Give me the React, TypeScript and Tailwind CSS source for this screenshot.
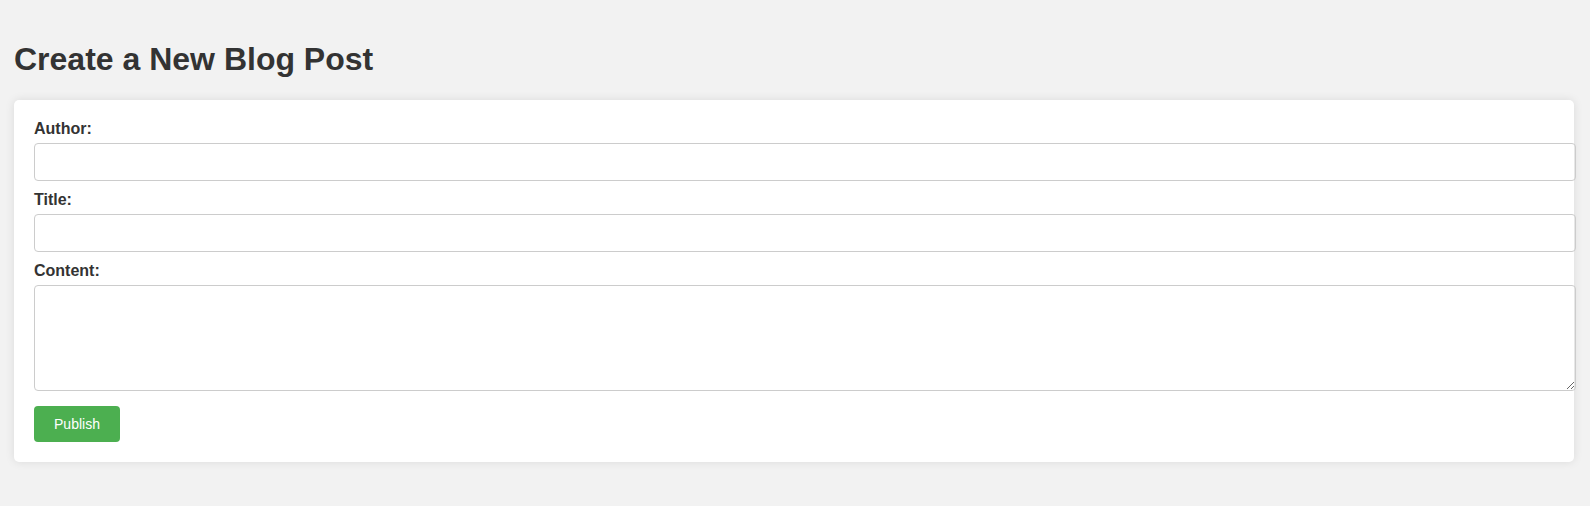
import { useState } from 'react';

const fields = [
  { id: 'author', label: 'Author:' },
  { id: 'title', label: 'Title:' },
];

export default function App() {
  const [form, setForm] = useState({ author: '', title: '', content: '' });

  const update = (key: string, value: string) => setForm({ ...form, [key]: value });

  return (
    <div className="min-h-[506px] bg-[#f2f2f2] pl-[14px] pr-[16px] pt-[20px] pb-[44px] font-['Liberation_Sans',Arial,sans-serif] text-[#333]">
      <h1 className="mt-[21px] mb-[22px] text-[32px] font-bold leading-[37px]">Create a New Blog Post</h1>

      <form
        className="rounded-[5px] bg-white p-5 shadow-[0_0_10px_rgba(0,0,0,0.1)]"
        onSubmit={(e) => e.preventDefault()}
      >
        {fields.map((f) => (
          <div key={f.id}>
            <label htmlFor={f.id} className="mb-[5px] block text-base font-bold leading-[18px]">
              {f.label}
            </label>
            <input
              id={f.id}
              type="text"
              value={form[f.id as 'author' | 'title']}
              onChange={(e) => update(f.id, e.target.value)}
              className="mb-[10px] block h-[38px] w-[calc(100%+22px)] rounded-[4px] border border-[#ccc] px-[10px] text-[13px] outline-none"
            />
          </div>
        ))}

        <label htmlFor="content" className="mb-[5px] block text-base font-bold leading-[18px]">
          Content:
        </label>
        <textarea
          id="content"
          value={form.content}
          onChange={(e) => update('content', e.target.value)}
          className="block h-[106px] w-[calc(100%+22px)] rounded-[4px] border border-[#ccc] p-[10px] text-[13px] outline-none"
        />

        {/* Submit */}
        <button
          type="submit"
          className="mt-[15px] block h-[36px] w-[86px] rounded-[4px] bg-[#4caf50] text-[14px] leading-4 text-white"
        >
          Publish
        </button>
      </form>
    </div>
  );
}
